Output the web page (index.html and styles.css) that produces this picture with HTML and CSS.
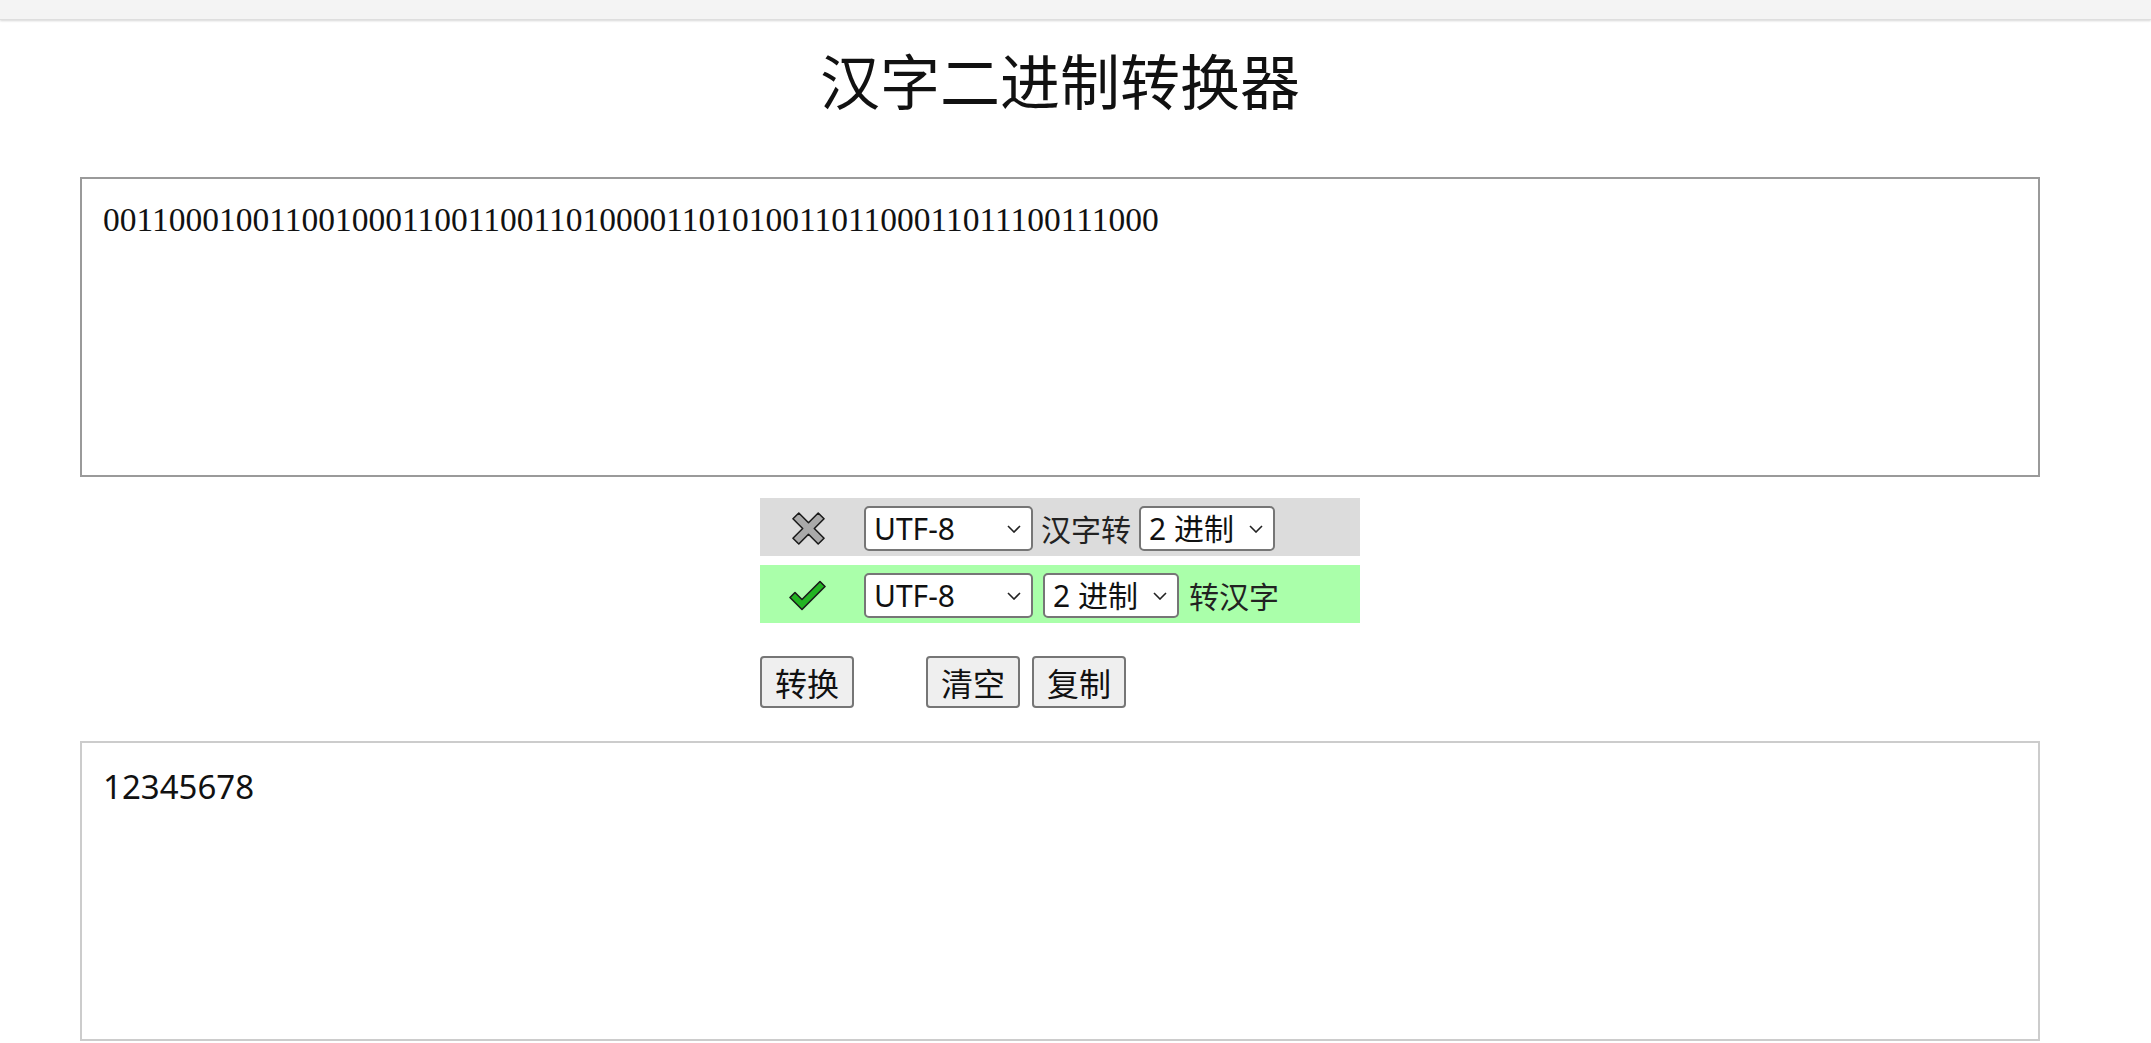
FILE: index.html
```html
<!DOCTYPE html>
<html lang="zh-CN">
<head>
<meta charset="utf-8">
<title>汉字二进制转换器</title>
<link rel="stylesheet" href="styles.css">
</head>
<body>
<div class="topbar"></div>
<main class="page">
  <h1 class="title">汉字二进制转换器</h1>
  <textarea class="input-box" spellcheck="false">0011000100110010001100110011010000110101001101100011011100111000</textarea>
  <section class="panel">
    <div class="mode mode-off">
      <span class="mode-icon">
        <svg width="35" height="33" viewBox="-1 -1 34 34"><polygon points="6,0 16,10 26,0 32,6 22,16 32,26 26,32 16,22 6,32 0,26 10,16 0,6" fill="#a9a9a9" stroke="#1a1a1a" stroke-width="1.6" stroke-linejoin="round"/></svg>
      </span>
      <span class="sel-wrap sel-wide">
        <select class="sel"><option>UTF-8</option></select>
        <svg class="chev" width="14" height="8" viewBox="0 0 14 8"><polyline points="1,1 7,7 13,1" fill="none" stroke="#222" stroke-width="1.6"/></svg>
      </span>
      <span class="mode-text">汉字转</span>
      <span class="sel-wrap sel-narrow">
        <select class="sel"><option>2 进制</option></select>
        <svg class="chev" width="14" height="8" viewBox="0 0 14 8"><polyline points="1,1 7,7 13,1" fill="none" stroke="#222" stroke-width="1.6"/></svg>
      </span>
    </div>
    <div class="mode mode-on">
      <span class="mode-icon">
        <svg width="38" height="32" viewBox="-1 -1 38 31"><polygon points="0,16 5,11 12,18 30,0 35,5 12,28" fill="#22b422" stroke="#1a1a1a" stroke-width="1.6" stroke-linejoin="round"/></svg>
      </span>
      <span class="sel-wrap sel-wide">
        <select class="sel"><option>UTF-8</option></select>
        <svg class="chev" width="14" height="8" viewBox="0 0 14 8"><polyline points="1,1 7,7 13,1" fill="none" stroke="#222" stroke-width="1.6"/></svg>
      </span>
      <span class="sel-wrap sel-narrow">
        <select class="sel"><option>2 进制</option></select>
        <svg class="chev" width="14" height="8" viewBox="0 0 14 8"><polyline points="1,1 7,7 13,1" fill="none" stroke="#222" stroke-width="1.6"/></svg>
      </span>
      <span class="mode-text">转汉字</span>
    </div>
    <div class="actions">
      <button class="btn" type="button">转换</button>
      <button class="btn btn-clear" type="button">清空</button>
      <button class="btn btn-copy" type="button">复制</button>
    </div>
  </section>
  <textarea class="output-box" spellcheck="false">12345678</textarea>
</main>
</body>
</html>
```
FILE: styles.css
```css
html, body {
  margin: 0;
  padding: 0;
  background: #ffffff;
  overflow: hidden;
}

body {
  font-family: "Noto Sans", "Noto Sans CJK SC", sans-serif;
  color: #111111;
}

.topbar {
  height: 19px;
  background: #f4f4f4;
  box-shadow: 0 1px 2px rgba(0, 0, 0, 0.16);
  border-bottom: 1px solid #dedede;
}

.page {
  width: 1960px;
  margin-left: 80px;
}

.title {
  margin: 15px 0 0;
  font-family: "Noto Sans CJK SC", sans-serif;
  font-size: 60px;
  font-weight: 400;
  line-height: 87px;
  text-align: center;
  color: #111111;
}

.input-box,
.output-box {
  display: block;
  box-sizing: border-box;
  width: 1960px;
  height: 300px;
  padding: 21px;
  resize: none;
  overflow: hidden;
  color: #111111;
  background: #ffffff;
  outline: none;
}

.input-box {
  margin-top: 55px;
  border: 2px solid #9a9a9a;
  font-family: "Liberation Serif", serif;
  font-size: 33.5px;
  line-height: 40px;
}

.output-box {
  margin-top: 33px;
  border: 2px solid #cccccc;
  font-family: "Noto Sans", sans-serif;
  font-size: 33px;
  line-height: 45px;
}

.panel {
  width: 600px;
  margin: 21px auto 0;
}

.mode {
  display: flex;
  align-items: center;
  gap: 8px;
  height: 58px;
  box-sizing: border-box;
  padding-top: 3px;
}

.mode + .mode {
  margin-top: 9px;
}

.mode-off {
  background: #dcdcdc;
}

.mode-on {
  background: #aaffaa;
}

.mode-icon {
  width: 96px;
  display: flex;
  justify-content: center;
  align-items: center;
}

.mode-text {
  font-family: "Noto Sans CJK SC", sans-serif;
  font-size: 30px;
  color: #222222;
  line-height: 45px;
}

.mode-on .mode-text {
  margin-left: 2px;
}

.sel-wrap {
  position: relative;
  display: block;
  height: 45px;
}

.sel-wide {
  width: 169px;
}

.sel-narrow {
  width: 136px;
}

.mode-on .sel-narrow {
  margin-left: 2px;
}

.sel {
  appearance: none;
  -webkit-appearance: none;
  box-sizing: border-box;
  width: 100%;
  height: 45px;
  margin: 0;
  padding: 0 0 0 8px;
  border: 2px solid #767676;
  border-radius: 5px;
  background: #ffffff;
  color: #111111;
  font-family: "Noto Sans", "Noto Sans CJK SC", sans-serif;
  font-size: 30px;
  line-height: 41px;
}

.chev {
  position: absolute;
  right: 12px;
  top: 19px;
  pointer-events: none;
}

.actions {
  display: flex;
  margin-top: 33px;
}

.btn {
  box-sizing: border-box;
  width: 94px;
  height: 52px;
  padding: 0;
  border: 2px solid #767676;
  border-radius: 4px;
  background: #efefef;
  color: #111111;
  font-family: "Noto Sans CJK SC", sans-serif;
  font-size: 32px;
  line-height: 46px;
}

.btn-clear {
  margin-left: 72px;
}

.btn-copy {
  margin-left: 12px;
}
```
